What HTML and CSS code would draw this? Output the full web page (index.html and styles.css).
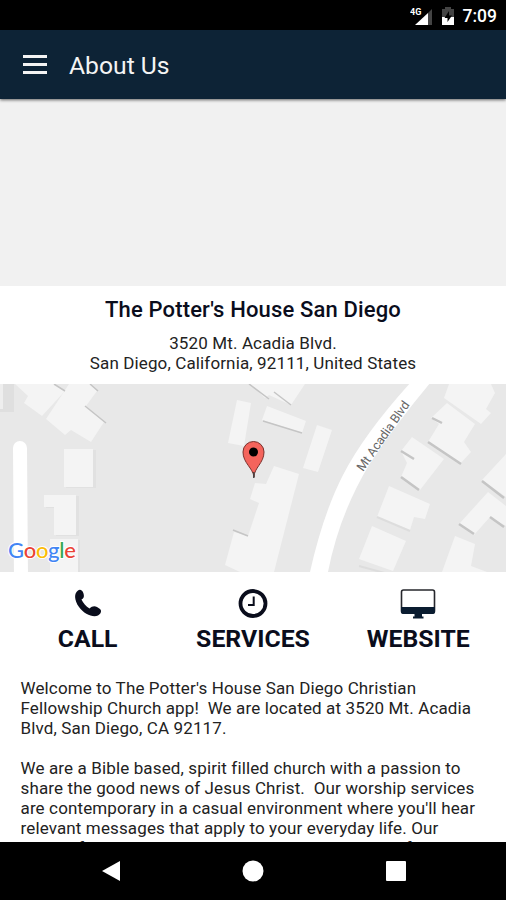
FILE: index.html
```html
<!DOCTYPE html>
<html lang="en">
<head>
  <meta charset="UTF-8" />
  <meta name="viewport" content="width=device-width, initial-scale=1.0" />
  <title>About Us</title>
  <link rel="stylesheet" href="styles.css">
</head>
<body>
  <div class="status-bar">
    <svg class="signal" width="24" height="20" viewBox="0 0 24 20">
      <path d="M22 3V19H18V7z" fill="#444" />
      <path d="M18 7V19H5z" fill="#fff" />
      <text x="0" y="9">4G</text>
    </svg>
    <svg class="battery" width="12" height="18" viewBox="0 0 12 18">
      <path d="M0 2H3V0H9V2H12V10H0z" fill="#444" />
      <path d="M0 10H12V18H0z" fill="#fff" />
      <path d="M7 4L2.5 11H5.5V15L10 8.5H7z" fill="#000" />
    </svg>
    <span class="time">7:09</span>
  </div>

  <header>
    <div class="menu"><i></i><i></i><i></i></div>
    <h1>About Us</h1>
  </header>

  <main>
    <div class="banner"></div>

    <section class="address">
      <h2>The Potter's House San Diego</h2>
      <p>3520 Mt. Acadia Blvd.<br>San Diego, California, 92111, United States</p>
    </section>

    <div class="map">
      <svg width="506" height="188" viewBox="0 384 506 188">
        <rect y="384" width="506" height="188" fill="#e8e8e8" />
        <path d="M0 384H14V412H0z" fill="#dfdfdf" />
        <!-- building shadows -->
        <g fill="#e1e1e1">
          <path d="M66 450H96V488H66zM46 496H79V536H56V508H46zM52 540H80V572H52z" />
          <path d="M0 384H3V409H0z" fill="#eee" />
        </g>
        <!-- buildings -->
        <g fill="#f4f4f4">
          <path d="M15 384H54L65 391L42 416L24 403L28 396z" />
          <path d="M69 384H90L97 391L86 406L104 422L91 442L71 430L65 435L46 419z" />
          <path d="M64 449H93V487H64zM44 495H76V535H54V507H44zM50 539H78V572H50z" />
          <path d="M250 384H305L291 405L269 395L265 398z" />
          <path d="M237 400L251 403L244 446L228 443zM267 406L306 421L302 433L262 420zM317 425L332 430L318 472L303 468z" />
          <path d="M274 466L299 474L274 572H240L225 565L234 532L248 536L259 503L250 499L255 483L266 484z" />
          <path d="M449 384H491L495 393L486 409L491 413L481 424L444 398z" />
          <path d="M447 403L475 424L464 442L471 452L460 464L428 442L439 424L431 418z" />
          <path d="M412 437L444 459L420 490L401 477L407 463L401 451z" />
          <path d="M389 486L430 504L425 519L414 517L410 530L377 517z" />
          <path d="M372 526L406 541L393 571L359 559z" />
          <path d="M506 454V497L482 480zM488 492L506 506V526L490 517L474 535L459 524z" />
          <path d="M455 536L475 544L471 566L487 572H442z" />
        </g>
        <g fill="none" stroke="#c5c5c5" stroke-width="2">
          <path d="M54 384L65 391M90 384L98 391M85 406L106 423M249 384L269 399M274 392L291 405M263 421L302 433M233 530L248 536" stroke-width="1.5" />
          <path d="M432 418L442 423M428 442L461 464M401 451L414 459M401 477L419 490M482 481L504 498M490 517L504 527M459 524L474 534" stroke-width="2.5" />
          <path d="M377 517L410 531M359 566L392 575" stroke="#ddd" />
        </g>
        <!-- roads -->
        <path d="M20 448L21 580" fill="none" stroke="#fff" stroke-width="14" stroke-linecap="round" />
        <path d="M411 382H431Q398 421 369 465Q339 515 328 572H310Q323 514 343 475Q364 434 411 382z" fill="#fff" />
        <text class="street" transform="translate(363 472) rotate(-55)" textLength="82">Mt Acadia Blvd</text>
        <!-- pin -->
        <path d="M254 477C253 468 243 463 243 452A10.5 10.5 0 0 1 264 452C264 463 254 468 254 477z" fill="#f4645c" stroke="#7b302c" />
        <path d="M253.8 472V478" stroke="#444" stroke-width="1.5" />
        <circle cx="253.5" cy="452" r="4.500" fill="#000" />
        <g class="google">
          <text x="8" y="558" textLength="68"><tspan fill="#4285f4">G</tspan><tspan fill="#ea4335">o</tspan><tspan fill="#fbbc05">o</tspan><tspan fill="#4285f4">g</tspan><tspan fill="#34a853">l</tspan><tspan fill="#ea4335">e</tspan></text>
        </g>
      </svg>
    </div>

    <nav class="actions">
      <a>
        <svg width="28" height="30" viewBox="0 0 28 30">
          <path d="M4 1.500C6 0 8.500 1 9.500 4.500C10.500 8 9.500 9.500 7.500 10.500C9 14 12 17.500 15.500 19.500C18 17 20.500 16.500 23 18L26 20C28 21.500 27 25 24 26.500C19 29 10 25 5 18C0 11 0 4 4 1.500z" />
        </svg>
        CALL
      </a>
      <a>
        <svg width="30" height="30" viewBox="0 0 30 30">
          <circle cx="15" cy="14.500" r="12.500" fill="none" stroke="#0a0d1c" stroke-width="3.800" />
          <path d="M15.700 7.500V16H10" fill="none" stroke="#0a0d1c" stroke-width="2" />
        </svg>
        SERVICES
      </a>
      <a>
        <svg width="36" height="30" viewBox="0 0 36 30">
          <rect x="1.500" y="1" width="33" height="23" rx="2" fill="#fff" stroke="#26272c" stroke-width="1.600" />
          <path d="M1 18H35V23Q35 25 33 25H22V27.500H23.500V29.500H13V27.500H14.500V25H3Q1 25 1 23z" fill="#0a1c30" />
        </svg>
        WEBSITE
      </a>
    </nav>

    <section class="about">
      <p>Welcome to The Potter's House San Diego Christian<br>
      Fellowship Church app!&nbsp; We are located at 3520 Mt. Acadia<br>
      Blvd, San Diego, CA 92117.</p>
      <p>We are a Bible based, spirit filled church with a passion to<br>
      share the good news of Jesus Christ.&nbsp; Our worship services<br>
      are contemporary in a casual environment where you'll hear<br>
      relevant messages that apply to your everyday life. Our<br>
      range of small group services has been a source of</p>
    </section>
  </main>

  <footer>
    <svg width="18" height="22" viewBox="0 0 18 22"><path d="M18 1V21L0 11z" /></svg>
    <svg width="22" height="22" viewBox="0 0 22 22"><circle cx="11" cy="11" r="10.500" /></svg>
    <svg width="20" height="20" viewBox="0 0 20 20"><rect width="20" height="20" rx="1" /></svg>
  </footer>
</body>
</html>
```
FILE: styles.css
```css
body {
  font-family: Roboto, sans-serif;
  margin: 0;
  height: 900px;
  display: flex;
  flex-direction: column;
  overflow: hidden;
  background: #fff;
  color: #222;
}
.status-bar {
  height: 30px;
  flex: none;
  background: #000;
  color: #fff;
  display: flex;
  align-items: center;
  justify-content: flex-end;
  padding-right: 9px;
  box-sizing: border-box;
}
.signal {
  margin-right: 8px;
  margin-top: 1px;
}
.signal text {
  font-size: 9px;
  font-weight: bold;
  fill: #fff;
}
.battery {
  margin-right: 9px;
  margin-top: 1px;
}
.time {
  font-size: 17.5px;
  font-weight: 500;
  padding-top: 2px;
}
header {
  height: 69px;
  flex: none;
  background: #0d2336;
  color: #f4f4f4;
  display: flex;
  align-items: center;
  padding-left: 23px;
  box-shadow: 0 1px 3px rgba(0,0,0,0.6);
  z-index: 1;
}
.menu {
  width: 24px;
  margin-right: 22px;
}
.menu i {
  display: block;
  height: 3px;
  margin-bottom: 5px;
  background: #f4f4f4;
}
.menu i:last-child {
  margin-bottom: 0;
}
h1 {
  margin: 2px 0 0;
  font-size: 24.7px;
  font-weight: 400;
}
main {
  flex: 1;
  min-height: 0;
  overflow: hidden;
}
.banner {
  height: 187px;
  background: #f1f1f1;
}
.address {
  height: 98px;
  text-align: center;
  overflow: hidden;
}
h2 {
  margin: 10px 0 9px;
  font-size: 22px;
  line-height: 28px;
  font-weight: 500;
  letter-spacing: 0.15px;
  color: #0a0d1c;
}
.address p {
  margin: 0;
  font-size: 17px;
  line-height: 20px;
  letter-spacing: 0.13px;
}
.map svg {
  display: block;
}
.street {
  font-size: 12.5px;
  fill: #666;
}
.google {
  font-family: Lato, sans-serif;
  font-size: 22px;
  font-weight: 500;
  stroke: #fff;
  stroke-width: 2px;
  paint-order: stroke;
}
.actions {
  display: grid;
  grid-template-columns: 1fr 1fr 1fr;
  width: 496px;
  margin: 0 auto;
  padding-top: 17px;
  height: 89px;
}
.actions a {
  display: flex;
  flex-direction: column;
  align-items: center;
  font-size: 24.8px;
  line-height: 30px;
  font-weight: 700;
  color: #0a0d1c;
}
.actions svg {
  fill: #0a0d1c;
  margin-bottom: 5px;
}
.about {
  padding: 0 20.5px;
  font-size: 17px;
  line-height: 20px;
  letter-spacing: 0.13px;
  white-space: nowrap;
}
.about p {
  margin: 0 0 20px;
}
footer {
  height: 58px;
  flex: none;
  background: #000;
  display: flex;
  align-items: center;
  justify-content: space-between;
  padding: 0 100px 0 102px;
  box-sizing: border-box;
}
footer svg {
  fill: #fff;
}
```
